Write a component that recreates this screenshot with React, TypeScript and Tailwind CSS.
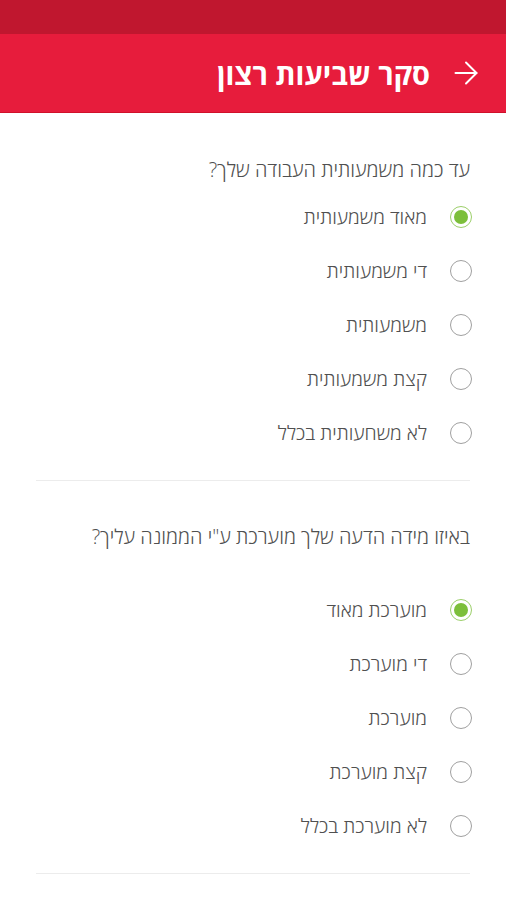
import { ArrowRight } from 'lucide-react'

const questions = [
  {
    title: 'עד כמה משמעותית העבודה שלך?',
    gap: 'mt-2',
    options: ['מאוד משמעותית', 'די משמעותית', 'משמעותית', 'קצת משמעותית', 'לא משחעותית בכלל'],
  },
  {
    title: 'באיזו מידה הדעה שלך מוערכת ע"י הממונה עליך?',
    gap: 'mt-[34px]',
    options: ['מוערכת מאוד', 'די מוערכת', 'מוערכת', 'קצת מוערכת', 'לא מוערכת בכלל'],
  },
]

function Radio({ checked }: { checked: boolean }) {
  if (checked) {
    return (
      <span className="h-[22px] w-[22px] shrink-0 rounded-full border-[1.5px] border-[#9ccf6a] flex items-center justify-center">
        <span className="h-[14px] w-[14px] rounded-full bg-[#7cbf3a]" />
      </span>
    )
  }
  return <span className="h-[22px] w-[22px] shrink-0 rounded-full border-[1.5px] border-[#a0a0a0]" />
}

export default function App() {
  return (
    <div dir="rtl" className="w-[506px] h-[900px] bg-white overflow-hidden" style={{ fontFamily: '"Open Sans", "Liberation Sans", sans-serif' }}>
      <div className="h-[34px] bg-[#c0172f]" />
      <div className="h-[79px] bg-[#e71c3c] border-b border-[#d0102a] flex items-center pr-[22px]">
        <ArrowRight className="h-[36px] w-[36px] text-white" strokeWidth={1.3} />
        <h1 className="mr-[18px] text-[29px] font-bold text-white leading-none">סקר שביעות רצון</h1>
      </div>

      <div className="px-9">
        {questions.map((q, qi) => (
          <div key={qi} className={qi === 0 ? 'pt-[45px]' : 'pt-[44px]'}>
            <p className="text-[20px] leading-6 text-[#505050] font-light">{q.title}</p>
            <div className={q.gap}>
              {q.options.map((o, i) => (
                <div key={o} className="h-[54px] flex items-center -mr-[2px]">
                  <Radio checked={i === 0} />
                  <span className="mr-[23px] text-[19.5px] leading-6 text-[#505050] font-light">{o}</span>
                </div>
              ))}
            </div>
            <div className="mt-[20px] border-t border-[#ececec]" />
          </div>
        ))}
      </div>
    </div>
  )
}
